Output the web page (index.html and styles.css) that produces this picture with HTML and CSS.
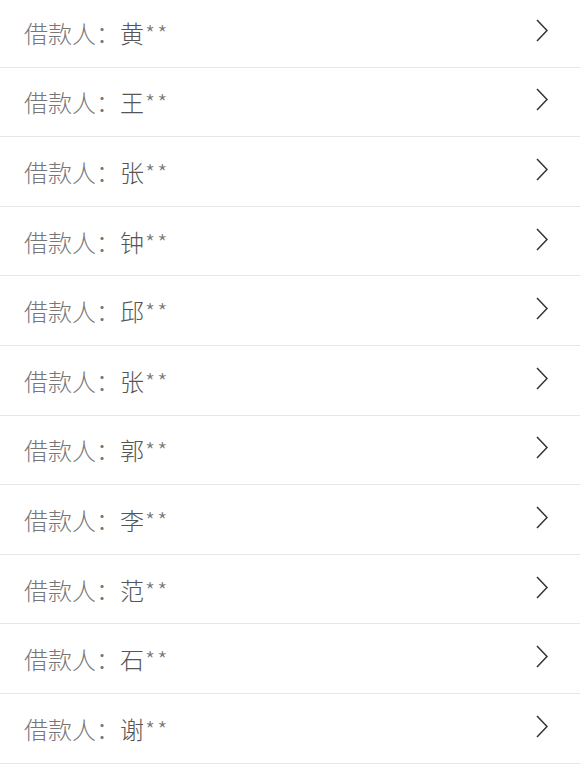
FILE: index.html
```html
<!DOCTYPE html>
<html lang="zh-CN">
<head>
    <meta charset="UTF-8">
    <meta name="viewport" content="width=device-width, initial-scale=1.0">
    <title>借款人列表</title>
    <link rel="stylesheet" href="styles.css">
</head>
<body>
<ul class="borrower-list">
    <li class="borrower"><span class="label">借款人：</span><span class="name">黄<span class="mask">**</span></span><svg class="arrow" viewBox="0 0 12 24"><path d="M1 1 L11 11.5 L1 22"/></svg></li>
    <li class="borrower"><span class="label">借款人：</span><span class="name">王<span class="mask">**</span></span><svg class="arrow" viewBox="0 0 12 24"><path d="M1 1 L11 11.5 L1 22"/></svg></li>
    <li class="borrower"><span class="label">借款人：</span><span class="name">张<span class="mask">**</span></span><svg class="arrow" viewBox="0 0 12 24"><path d="M1 1 L11 11.5 L1 22"/></svg></li>
    <li class="borrower"><span class="label">借款人：</span><span class="name">钟<span class="mask">**</span></span><svg class="arrow" viewBox="0 0 12 24"><path d="M1 1 L11 11.5 L1 22"/></svg></li>
    <li class="borrower"><span class="label">借款人：</span><span class="name">邱<span class="mask">**</span></span><svg class="arrow" viewBox="0 0 12 24"><path d="M1 1 L11 11.5 L1 22"/></svg></li>
    <li class="borrower"><span class="label">借款人：</span><span class="name">张<span class="mask">**</span></span><svg class="arrow" viewBox="0 0 12 24"><path d="M1 1 L11 11.5 L1 22"/></svg></li>
    <li class="borrower"><span class="label">借款人：</span><span class="name">郭<span class="mask">**</span></span><svg class="arrow" viewBox="0 0 12 24"><path d="M1 1 L11 11.5 L1 22"/></svg></li>
    <li class="borrower"><span class="label">借款人：</span><span class="name">李<span class="mask">**</span></span><svg class="arrow" viewBox="0 0 12 24"><path d="M1 1 L11 11.5 L1 22"/></svg></li>
    <li class="borrower"><span class="label">借款人：</span><span class="name">范<span class="mask">**</span></span><svg class="arrow" viewBox="0 0 12 24"><path d="M1 1 L11 11.5 L1 22"/></svg></li>
    <li class="borrower"><span class="label">借款人：</span><span class="name">石<span class="mask">**</span></span><svg class="arrow" viewBox="0 0 12 24"><path d="M1 1 L11 11.5 L1 22"/></svg></li>
    <li class="borrower"><span class="label">借款人：</span><span class="name">谢<span class="mask">**</span></span><svg class="arrow" viewBox="0 0 12 24"><path d="M1 1 L11 11.5 L1 22"/></svg></li>
</ul>
</body>
</html>
```

FILE: styles.css
```css
body {
    margin: 0;
    padding: 0;
    background-color: #fff;
    font-family: "Noto Sans CJK SC", "Noto Sans", sans-serif;
    overflow: hidden;
}

.borrower-list {
    list-style-type: none;
    margin: -2px 0 0 0;
    padding: 0;
}

.borrower {
    display: flex;
    align-items: center;
    height: 69.6px;
    box-sizing: border-box;
    padding: 0 32px 0 24px;
    border-bottom: 1.5px solid #e6e6e6;
    font-size: 24px;
    font-weight: 300;
    color: #666;
}

.borrower .label {
    color: #777;
}

.borrower .name {
    flex: 1;
    color: #555;
}

.mask {
    font-size: 23px;
    letter-spacing: 2px;
    color: #777;
    margin-left: 1px;
}

.arrow {
    width: 12px;
    height: 24px;
    margin-top: -3px;
    fill: none;
    stroke: #333;
    stroke-width: 1.5;
}
```
